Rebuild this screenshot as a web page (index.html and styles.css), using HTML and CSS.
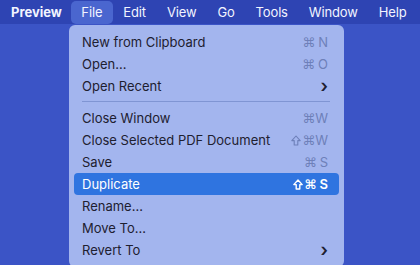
FILE: index.html
```html
<!DOCTYPE html>
<html lang="en">
<head>
  <meta charset="UTF-8">
  <title>Preview - File menu</title>
  <link rel="stylesheet" href="styles.css">
</head>
<body>
  <!-- Menu bar -->
  <div class="menubar">
    <span class="app">Preview</span>
    <span class="item active">File</span>
    <span class="item">Edit</span>
    <span class="item">View</span>
    <span class="item">Go</span>
    <span class="item">Tools</span>
    <span class="item">Window</span>
    <span class="item">Help</span>
  </div>

  <!-- File menu -->
  <div class="menu">
    <div class="row"><span>New from Clipboard</span><span class="key"><i class="cmd">⌘</i><b class="gap">N</b></span></div>
    <div class="row"><span>Open…</span><span class="key"><i class="cmd">⌘</i><b class="gap">O</b></span></div>
    <div class="row"><span>Open Recent</span><span class="arrow">›</span></div>
    <div class="sep"></div>
    <div class="row"><span>Close Window</span><span class="key"><i class="cmd">⌘</i><b>W</b></span></div>
    <div class="row"><span>Close Selected PDF Document</span><span class="key"><svg class="shift" width="10" height="11" viewBox="0 0 10 11"><path d="M5 1 L9.2 5.6 H6.8 V10 H3.2 V5.6 H0.8 Z" fill="none" stroke="currentColor" stroke-width="1.1" stroke-linejoin="round"/></svg><i class="cmd">⌘</i><b>W</b></span></div>
    <div class="row"><span>Save</span><span class="key"><i class="cmd">⌘</i><b class="gap">S</b></span></div>
    <div class="row selected"><span>Duplicate</span><span class="key"><svg class="shift" width="10" height="11" viewBox="0 0 10 11"><path d="M5 1 L9.2 5.6 H6.8 V10 H3.2 V5.6 H0.8 Z" fill="none" stroke="currentColor" stroke-width="1.4" stroke-linejoin="round"/></svg><i class="cmd">⌘</i><b class="gap">S</b></span></div>
    <div class="row"><span>Rename…</span></div>
    <div class="row"><span>Move To…</span></div>
    <div class="row"><span>Revert To</span><span class="arrow">›</span></div>
  </div>
</body>
</html>
```

FILE: styles.css
```css
body {
  margin: 0;
  width: 420px;
  height: 265px;
  overflow: hidden;
  background-color: #3b54c6;
  font-family: Inter, "Liberation Sans", sans-serif;
  font-size: 13px;
}
.menubar {
  height: 24px;
  background-color: #2e44b3;
  display: flex;
  align-items: center;
  padding-left: 11px;
  color: #f2f4ff;
}
.menubar .app {
  font-weight: 700;
  margin-right: 9px;
}
.menubar .item {
  height: 23px;
  line-height: 23px;
  padding: 0 10.5px;
  letter-spacing: -0.15px;
  border-radius: 5px;
}
.menubar .item.active {
  background-color: #4a66cf;
}
.menu {
  margin: 1px 0 0 69px;
  width: 265px;
  padding: 6px 5px;
  background-color: #a3b5ee;
  border-radius: 6px;
  color: #1e2030;
}
.row {
  height: 22px;
  display: flex;
  align-items: center;
  justify-content: space-between;
  padding: 0 11px 0 8px;
  border-radius: 4px;
}
.row .key {
  color: #6e80b9;
  font-size: 13px;
  display: flex;
  align-items: center;
}
.row .key i {
  font-style: normal;
  font-family: "DejaVu Sans", sans-serif;
  font-size: 13px;
}
.row .key b {
  font-weight: 400;
}
.row .key b.gap {
  margin-left: 3px;
}
.row .key .shift {
  margin-right: 1px;
}
.row .arrow {
  font-size: 18px;
  line-height: 1;
  font-weight: 600;
}
.row.selected {
  background-color: #2f74e0;
  color: #ffffff;
}
.row.selected .key {
  color: #ffffff;
}
.row.selected .key b,
.row.selected .key i {
  font-weight: 600;
}
.sep {
  height: 1px;
  margin: 4px 9px 5px 8px;
  background-color: #8095d3;
}
```
